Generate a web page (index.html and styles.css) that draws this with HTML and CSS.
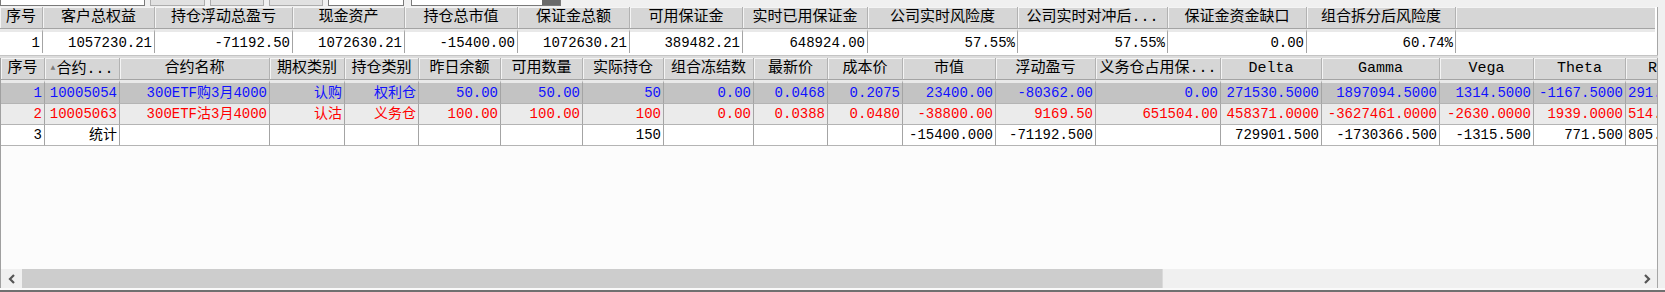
FILE: index.html
```html
<!DOCTYPE html>
<html lang="zh">
<head>
<meta charset="utf-8">
<title>持仓</title>
<link rel="stylesheet" href="styles.css">
</head>
<body>
<div class="app">
  <div class="topstrip">
    <div class="ctl box w145"></div>
    <div class="ctl btn w55"></div>
    <div class="ctl btn w54"></div>
    <div class="ctl btn w54"></div>
    <div class="ctl box w76"></div>
    <div class="ctl combo"><span class="drop"></span></div>
  </div>

  <div class="panel1">
    <table class="grid g1">
      <colgroup>
        <col style="width:43px"><col style="width:112px"><col style="width:138px"><col style="width:112px">
        <col style="width:113px"><col style="width:112px"><col style="width:113px"><col style="width:125px">
        <col style="width:150px"><col style="width:150px"><col style="width:139px"><col style="width:149px">
        <col>
      </colgroup>
      <thead>
        <tr>
          <th>序号</th><th>客户总权益</th><th>持仓浮动总盈亏</th><th>现金资产</th><th>持仓总市值</th>
          <th>保证金总额</th><th>可用保证金</th><th>实时已用保证金</th><th>公司实时风险度</th>
          <th>公司实时对冲后...</th><th>保证金资金缺口</th><th>组合拆分后风险度</th><th class="blank"></th>
        </tr>
      </thead>
      <tbody>
        <tr>
          <td>1</td><td>1057230.21</td><td>-71192.50</td><td>1072630.21</td><td>-15400.00</td>
          <td>1072630.21</td><td>389482.21</td><td>648924.00</td><td>57.55%</td><td>57.55%</td>
          <td>0.00</td><td>60.74%</td><td class="blank"></td>
        </tr>
      </tbody>
    </table>
  </div>

  <div class="divider"></div>

  <div class="panel2">
    <table class="grid g2">
      <colgroup>
        <col style="width:44px"><col style="width:75px"><col style="width:150px"><col style="width:75px">
        <col style="width:74px"><col style="width:82px"><col style="width:82px"><col style="width:81px">
        <col style="width:90px"><col style="width:74px"><col style="width:75px"><col style="width:93px">
        <col style="width:100px"><col style="width:125px"><col style="width:101px"><col style="width:118px">
        <col style="width:94px"><col style="width:92px"><col style="width:72px">
      </colgroup>
      <thead>
        <tr>
          <th>序号</th><th class="sort"><span class="tri">▲</span>合约...</th><th>合约名称</th><th>期权类别</th>
          <th>持仓类别</th><th>昨日余额</th><th>可用数量</th><th>实际持仓</th><th>组合冻结数</th>
          <th>最新价</th><th>成本价</th><th>市值</th><th>浮动盈亏</th><th>义务仓占用保...</th>
          <th>Delta</th><th>Gamma</th><th>Vega</th><th>Theta</th><th>Rho</th>
        </tr>
      </thead>
      <tbody>
        <tr class="r1 blue">
          <td>1</td><td>10005054</td><td>300ETF购3月4000</td><td>认购</td><td>权利仓</td>
          <td>50.00</td><td>50.00</td><td>50</td><td>0.00</td><td>0.0468</td><td>0.2075</td>
          <td>23400.00</td><td>-80362.00</td><td>0.00</td><td>271530.5000</td><td>1897094.5000</td>
          <td>1314.5000</td><td>-1167.5000</td><td class="left">291.5000</td>
        </tr>
        <tr class="r2 red">
          <td>2</td><td>10005063</td><td>300ETF沽3月4000</td><td>认沽</td><td>义务仓</td>
          <td>100.00</td><td>100.00</td><td>100</td><td>0.00</td><td>0.0388</td><td>0.0480</td>
          <td>-38800.00</td><td>9169.50</td><td>651504.00</td><td>458371.0000</td><td>-3627461.0000</td>
          <td>-2630.0000</td><td>1939.0000</td><td class="left">514.0000</td>
        </tr>
        <tr class="r3">
          <td>3</td><td>统计</td><td></td><td></td><td></td><td></td><td></td><td>150</td><td></td>
          <td></td><td></td><td>-15400.000</td><td>-71192.500</td><td></td><td>729901.500</td>
          <td>-1730366.500</td><td>-1315.500</td><td>771.500</td><td class="left">805.500</td>
        </tr>
      </tbody>
    </table>
  </div>

  <div class="hscroll">
    <div class="arrow">
      <svg width="10" height="10" viewBox="0 0 10 10"><path d="M7 1 L3 5 L7 9" fill="none" stroke="#555" stroke-width="2.2"/></svg>
    </div>
    <div class="thumb"></div>
    <div class="track"></div>
    <div class="arrow">
      <svg width="10" height="10" viewBox="0 0 10 10"><path d="M3 1 L7 5 L3 9" fill="none" stroke="#555" stroke-width="2.2"/></svg>
    </div>
  </div>
  <div class="bottomline"></div>
</div>
</body>
</html>
```

FILE: styles.css
```css
html, body {
  margin: 0;
  padding: 0;
  background: #f0f0f0;
}

body {
  width: 1665px;
  height: 292px;
  overflow: hidden;
  font-family: "Liberation Mono", "Noto Sans CJK SC", monospace;
}

.app {
  width: 1658px;
  display: flex;
  flex-direction: column;
}

/* top strip with bottoms of toolbar controls */
.topstrip {
  height: 7px;
  display: flex;
  align-items: flex-end;
  gap: 5px;
  overflow: hidden;
}

.ctl {
  height: 14px;
  box-sizing: border-box;
  margin-bottom: 1px;
}

.box {
  background: #fff;
  border: 1px solid #7a7a7a;
}

.btn {
  background: #e1e1e1;
  border: 1px solid #adadad;
}

.w145 { width: 145px; }
.w55 { width: 55px; }
.w54 { width: 54px; }
.w76 { width: 76px; margin-left: 0; }

.combo {
  width: 150px;
  margin-left: 2px;
  background: #fff;
  border: 1px solid #7a7a7a;
  display: flex;
  justify-content: flex-end;
}

.drop {
  width: 18px;
  background: #6a6a6a;
}

/* grids */
.grid {
  table-layout: fixed;
  border-collapse: separate;
  border-spacing: 0;
}

.grid th,
.grid td {
  box-sizing: border-box;
  white-space: nowrap;
  overflow: hidden;
  padding: 0 2px;
}

.grid th {
  background: #d6d6d6;
  font-weight: normal;
  font-size: 15px;
  color: #000;
  text-align: center;
  line-height: 19px;
  height: 21px;
  border-right: 1px solid #b2b2b2;
  border-bottom: 1px solid #a4a4a4;
  box-shadow: inset 1px 1px 0 #f4f4f4;
}

.grid th.blank {
  border-right: none;
}

.grid td {
  font-size: 14px;
  text-align: right;
  color: #000;
  line-height: 20px;
  height: 21px;
  border-right: 1px solid #a4a4a4;
  border-bottom: 1px solid #b4b4b4;
}

.grid tbody tr:first-child td {
  border-top: 3px solid #e9e9e9;
  height: 24px;
}

/* top table */
.panel1 {
  height: 48px;
  overflow: hidden;
  background: #fff;
  border-right: 1px solid #a6a6a6;
}

.g1 {
  width: 1655px;
}

.g1 th {
  height: 22px;
}

.g1 td {
  background: #fff;
  border-bottom: none;
}

.g1 td.blank {
  border-right: none;
}

.divider {
  height: 3px;
  background: #dcdcdc;
  border-top: 1px solid #c4c4c4;
  box-sizing: border-box;
}

/* bottom table */
.panel2 {
  height: 211px;
  overflow: hidden;
  background: #fcfcfc;
  border-left: 1px solid #a0a0a0;
  border-right: 1px solid #a6a6a6;
}

.g2 {
  width: 1697px;
}

.g2 th {
  height: 20px;
}

.g2 .sort .tri {
  font-size: 8px;
  color: #7a7a7a;
  vertical-align: 3px;
  margin-right: 1px;
}

.g2 td.left {
  text-align: left;
}

.r1 td {
  background: #c3c3c3;
}

.r2 td {
  background: #ebebeb;
}

.r3 td {
  background: #fff;
}

.blue td {
  color: #1010ff;
}

.red td {
  color: #ff0000;
}

/* horizontal scrollbar */
.hscroll {
  height: 19px;
  display: flex;
  background: #f0f0f0;
  border-left: 1px solid #a0a0a0;
  border-right: 1px solid #a6a6a6;
  padding-left: 1px;
}

.arrow {
  width: 20px;
  display: flex;
  align-items: center;
  justify-content: center;
  background: #f0f0f0;
}

.thumb {
  width: 1140px;
  background: #cdcdcd;
  border-right: 1px solid #dadada;
}

.track {
  flex: 1;
  background: #f0f0f0;
}

.bottomline {
  height: 4px;
  box-sizing: border-box;
  border-top: 2px solid #fafafa;
  border-bottom: 2px solid #707070;
  width: 1665px;
}
```
